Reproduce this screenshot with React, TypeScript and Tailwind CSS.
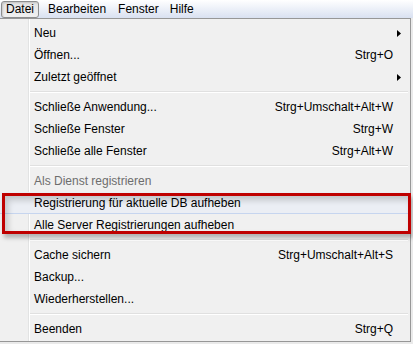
import React from "react";

type Item =
  | { sep: true }
  | { label: string; shortcut?: string; sub?: boolean; disabled?: boolean; hover?: boolean };

const items: Item[] = [
  { label: "Neu", sub: true },
  { label: "Öffnen...", shortcut: "Strg+O" },
  { label: "Zuletzt geöffnet", sub: true },
  { sep: true },
  { label: "Schließe Anwendung...", shortcut: "Strg+Umschalt+Alt+W" },
  { label: "Schließe Fenster", shortcut: "Strg+W" },
  { label: "Schließe alle Fenster", shortcut: "Strg+Alt+W" },
  { sep: true },
  { label: "Als Dienst registrieren", disabled: true },
  { label: "Registrierung für aktuelle DB aufheben", hover: true },
  { label: "Alle Server Registrierungen aufheben" },
  { sep: true },
  { label: "Cache sichern", shortcut: "Strg+Umschalt+Alt+S" },
  { label: "Backup..." },
  { label: "Wiederherstellen..." },
  { sep: true },
  { label: "Beenden", shortcut: "Strg+Q" },
];

function Arrow() {
  return (
    <svg width="4" height="7" viewBox="0 0 4 7" className="block">
      <path d="M0 0 L4 3.5 L0 7 Z" fill="#000" />
    </svg>
  );
}

export default function App() {
  return (
    <div
      className="w-[413px] h-[344px] overflow-hidden bg-[#eaeaea] text-[12px] text-black"
      style={{ fontFamily: '"Liberation Sans", Arial, sans-serif' }}
    >
      {/* Menu bar */}
      <div className="h-[18px] flex items-center bg-gradient-to-b from-[#ffffff] to-[#d9e1f1]">
        <div className="ml-[1px] h-[17px] flex items-center px-[4px] rounded-[3px] border border-[#8d8e8f] bg-gradient-to-b from-[#e3e3e3] to-[#f1f1f1] shadow-[inset_1px_1px_2px_rgba(0,0,0,0.15)]">
          Datei
        </div>
        <span className="ml-[9px]">Bearbeiten</span>
        <span className="ml-[12px]">Fenster</span>
        <span className="ml-[11px]">Hilfe</span>
      </div>

      {/* Dropdown */}
      <div className="relative w-[411px] border-t border-r border-b border-[#979797] bg-[#f0f0f0] pt-[3px] pb-[1px]">
        {/* gutter line */}
        <div className="absolute left-[28px] top-0 bottom-0 w-[2px] border-l border-[#e2e3e3] border-r-white border-r" />

        {items.map((it, i) =>
          "sep" in it ? (
            <div key={i} className="h-[8px] flex flex-col justify-center pl-[30px] pr-[2px]">
              <div className="h-[1px] bg-[#e0e0e0]" />
              <div className="h-[1px] bg-white" />
            </div>
          ) : (
            <div
              key={i}
              className={
                "relative h-[22px] flex items-center pl-[34px] " +
                (it.hover ? "bg-[#ebeef4] border-b border-[#c6d5ef]" : "")
              }
            >
              <span className={"flex-1 whitespace-nowrap " + (it.disabled ? "text-[#6d6d6d]" : "")}>
                {it.label}
              </span>
              {it.shortcut && <span className="whitespace-nowrap">{it.shortcut}</span>}
              <span className="w-[17px] flex justify-start pl-[4px]">{it.sub && <Arrow />}</span>
            </div>
          )
        )}

        {/* red annotation box */}
        <div className="absolute left-[2px] top-[174px] w-[409px] h-[41px] border-[3px] border-[#bf0000] shadow-[inset_3px_4px_6px_rgba(0,0,0,0.18),2px_4px_4px_rgba(0,0,0,0.25)]" />
      </div>
    </div>
  );
}
